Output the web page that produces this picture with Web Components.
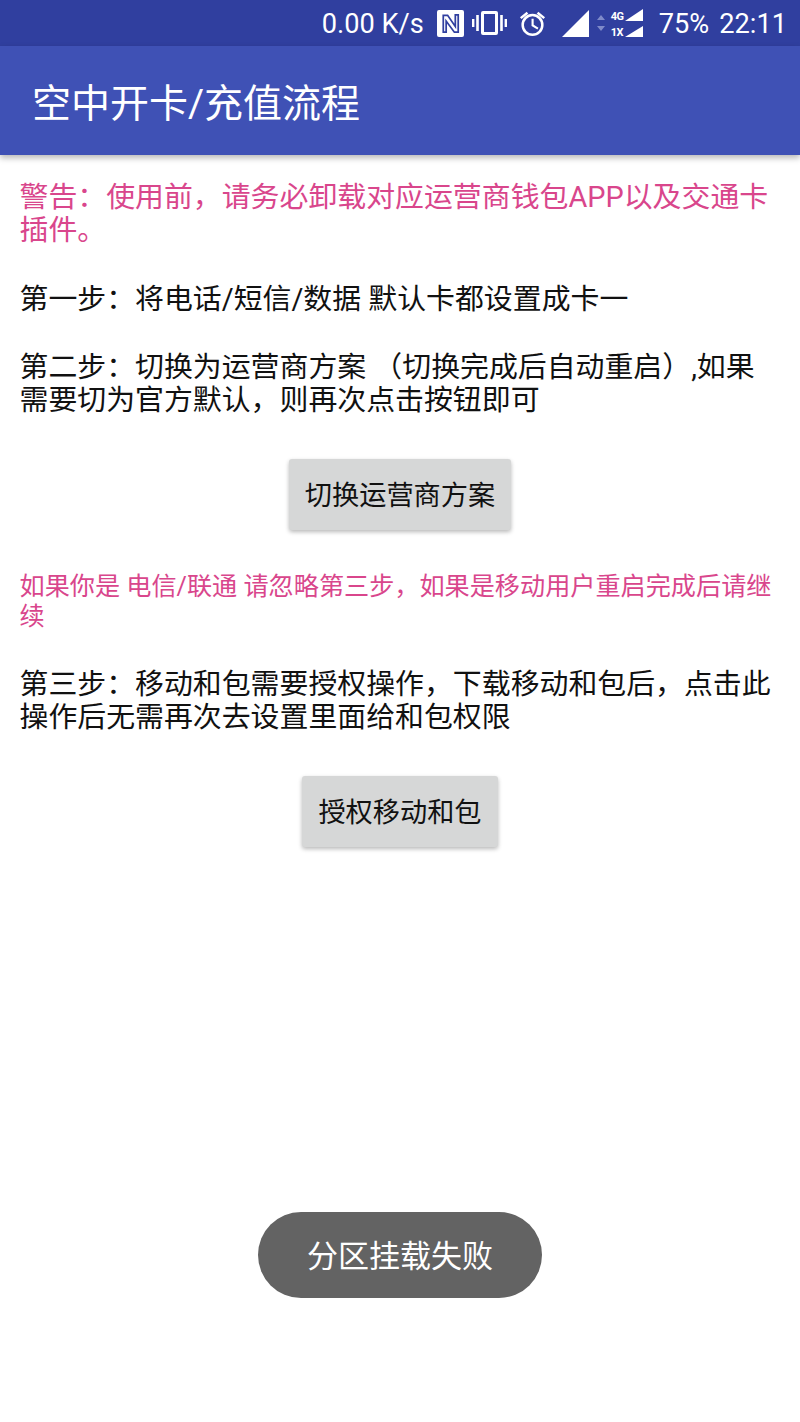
<!DOCTYPE html>
<html lang="zh">
<head>
<meta charset="utf-8">
<title>空中开卡/充值流程</title>
<style>
  html, body { margin: 0; padding: 0; background: #fff; }
  body { width: 800px; height: 1422px; position: relative; overflow: hidden;
    font-family: Roboto, "Noto Sans CJK SC", sans-serif; }
</style>
</head>
<body>
<app-screen>
  <status-bar slot="status"></status-bar>
  <app-toolbar slot="toolbar">空中开卡/充值流程</app-toolbar>
  <step-text tone="warn" style="margin-top:26px">警告：使用前，请务必卸载对应运营商钱包APP以及交通卡插件。</step-text>
  <step-text style="margin-top:36px">第一步：将电话/短信/数据 默认卡都设置成卡一</step-text>
  <step-text style="margin-top:35px">第二步：切换为运营商方案 （切换完成后自动重启）,如果需要切为官方默认，则再次点击按钮即可</step-text>
  <flat-button style="margin-top:42px">切换运营商方案</flat-button>
  <step-text tone="warn" size="small" style="margin-top:42px">如果你是 电信/联通 请忽略第三步，如果是移动用户重启完成后请继续</step-text>
  <step-text style="margin-top:36px">第三步：移动和包需要授权操作，下载移动和包后，点击此操作后无需再次去设置里面给和包权限</step-text>
  <flat-button style="margin-top:42px">授权移动和包</flat-button>
</app-screen>
<toast-message>分区挂载失败</toast-message>
<script>
class AppScreen extends HTMLElement {
  constructor() {
    super();
    this.attachShadow({ mode: 'open' });
    this.shadowRoot.innerHTML = `
      <style>
        :host { display: flex; flex-direction: column; width: 800px; height: 1422px; background: #fff; }
        main { display: flex; flex-direction: column; }
      </style>
      <slot name="status"></slot>
      <slot name="toolbar"></slot>
      <main><slot></slot></main>
    `;
  }
}

class StatusBar extends HTMLElement {
  constructor() {
    super();
    this.attachShadow({ mode: 'open' });
    this.shadowRoot.innerHTML = `
      <style>
        :host { display: flex; align-items: center; justify-content: flex-end; height: 46px;
          background: #303f9f; color: #fff; font: 27.2px Roboto, sans-serif; padding-right: 13px; box-sizing: border-box; }
        svg { display: block; fill: #fff; }
        .txt { padding-top: 2px; }
        .speed { margin-right: 13px; }
        .nfc { margin-right: 8px; }
        .vib { margin-right: 12px; }
        .alarm { margin-right: 16px; }
        .sig { margin-right: 8px; }
        .arrows { margin-right: 6px; }
        .net { margin-right: 16px; display: grid; grid-template-columns: 14px 18px; grid-template-rows: 12px 12px;
          row-gap: 4px; align-items: end; font: bold 11px/9px "Roboto", sans-serif; letter-spacing: -.6px; }
        .pct { margin-right: 10px; }
      </style>
      <span class="txt speed">0.00 K/s</span>
      <svg class="nfc" width="27" height="27" viewBox="0 0 28 28">
        <rect width="28" height="28" rx="2"/>
        <path fill="none" stroke="#303f9f" stroke-width="1.8" d="M6.5 23V5.5h4.5L19 17V5h3v18h-4L9.5 11.5V23z"/>
      </svg>
      <svg class="vib" width="35" height="24" viewBox="0 0 35 24">
        <path fill-rule="evenodd" d="M11 0h13a2 2 0 0 1 2 2v20a2 2 0 0 1-2 2H11a2 2 0 0 1-2-2V2a2 2 0 0 1 2-2zm1 3v18h11V3z"/>
        <rect x="0" y="8" width="2.4" height="8"/><rect x="4.2" y="4" width="2.6" height="16"/>
        <rect x="28.2" y="4" width="2.6" height="16"/><rect x="32.6" y="8" width="2.4" height="8"/>
      </svg>
      <svg class="alarm" width="27" height="27" viewBox="0 0 28 28">
        <circle cx="14" cy="15.5" r="10.2" fill="none" stroke="#fff" stroke-width="2.6"/>
        <path d="M13 9h2.2v6.4l5 3-1.1 1.8-6.1-3.7z"/>
        <path d="M8 1.8 9.6 3.8 2.6 9.4 1 7.4zM20 1.8l-1.6 2 7 5.6 1.6-2z"/>
      </svg>
      <svg class="sig" width="27" height="27" viewBox="0 0 27 27"><path d="M0 27 27 0v27z"/></svg>
      <svg class="arrows" width="8" height="16" viewBox="0 0 8 16">
        <path fill="#7f8ac9" d="M4 0 8 5H0zM4 16 0 11h8z"/>
      </svg>
      <span class="net">
        <span>4G</span>
        <svg width="18" height="12" viewBox="0 0 18 12"><path d="M0 12 18 0v12z"/></svg>
        <span>1X</span>
        <svg width="18" height="11" viewBox="0 0 18 11"><path d="M0 11 18 0v11z"/></svg>
      </span>
      <span class="txt pct">75%</span>
      <span class="txt">22:11</span>
    `;
  }
}

class AppToolbar extends HTMLElement {
  constructor() {
    super();
    this.attachShadow({ mode: 'open' });
    this.shadowRoot.innerHTML = `
      <style>
        :host { display: flex; align-items: center; height: 109px; padding: 0 0 2px 32px; box-sizing: border-box;
          background: #3f51b5; color: #fff; font: 39px Roboto, "Noto Sans CJK SC", sans-serif;
          box-shadow: 0 3px 6px rgba(0,0,0,.28); position: relative; }
      </style>
      <slot></slot>
    `;
  }
}

class StepText extends HTMLElement {
  constructor() {
    super();
    this.attachShadow({ mode: 'open' });
    const warn = this.getAttribute('tone') === 'warn';
    const small = this.getAttribute('size') === 'small';
    this.shadowRoot.innerHTML = `
      <style>
        :host { display: block; padding: 0 20px 0 19.5px; color: ${warn ? '#d9468c' : '#111'};
          font: ${small ? '25.15px/30px' : '28.9px/33px'} Roboto, "Noto Sans CJK SC", sans-serif; }
      </style>
      <slot></slot>
    `;
  }
}

class FlatButton extends HTMLElement {
  constructor() {
    super();
    this.attachShadow({ mode: 'open' });
    this.shadowRoot.innerHTML = `
      <style>
        :host { display: block; align-self: center; padding: 0 16px; height: 71px;
          background: #d6d7d7; color: #111; border-radius: 3px; font: 27.2px/75px Roboto, "Noto Sans CJK SC", sans-serif;
          box-shadow: 0 2px 4px rgba(0,0,0,.28); }
      </style>
      <slot></slot>
    `;
  }
}

class ToastMessage extends HTMLElement {
  constructor() {
    super();
    this.attachShadow({ mode: 'open' });
    this.shadowRoot.innerHTML = `
      <style>
        :host { position: absolute; left: 258px; top: 1212px; width: 284px; height: 86px; border-radius: 43px;
          display: flex; align-items: center; justify-content: center; padding-bottom: 4px; box-sizing: border-box;
          background: #636363; color: #fff; font: 31px Roboto, "Noto Sans CJK SC", sans-serif; }
      </style>
      <slot></slot>
    `;
  }
}

customElements.define('app-screen', AppScreen);
customElements.define('status-bar', StatusBar);
customElements.define('app-toolbar', AppToolbar);
customElements.define('step-text', StepText);
customElements.define('flat-button', FlatButton);
customElements.define('toast-message', ToastMessage);
</script>
</body>
</html>
